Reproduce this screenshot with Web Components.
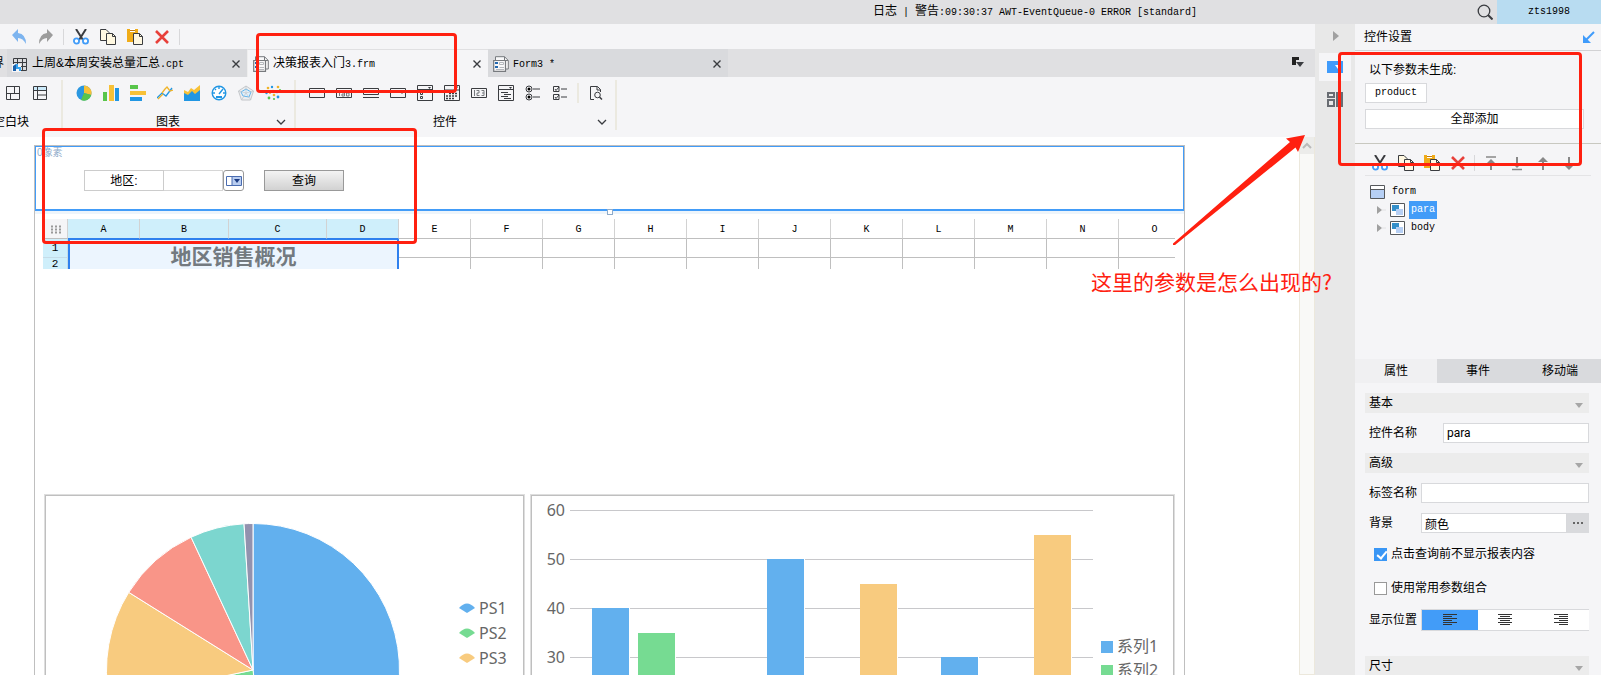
<!DOCTYPE html>
<html lang="zh-CN">
<head>
<meta charset="utf-8">
<title>Report Designer</title>
<style>
html,body{margin:0;height:100%;overflow:hidden;background:#f5f5f7}
body{font:12px/16px "Liberation Sans","Noto Sans CJK SC",sans-serif;color:#000}
</style>
</head>
<body>
<designer-app></designer-app>
<script>
const BASE = `*{box-sizing:border-box}
button,input{font:inherit;color:inherit;margin:0;border-radius:0}
button{background:none;border:0;padding:0;display:flex;align-items:center;justify-content:center}
.m{font:10px/16px "Liberation Mono",monospace}
`;
function define(name, css, html, setup) {
  const tpl = document.createElement('template');
  tpl.innerHTML = `<style>${BASE}${css}</style>${html}`;
  customElements.define(name, class extends HTMLElement {
    constructor() {
      super();
      this.attachShadow({mode: 'open'}).append(tpl.content.cloneNode(true));
    }
    connectedCallback() { if (setup) setup(this, this.shadowRoot); }
  });
}

/* icons, each drawn on a 16 x 16 grid */
const ICONS = {
  undo: '<path d="M1 6 7 0v4q8 1 8 11Q12 9 7 9v4z" fill="#7db4ef"/>',
  redo: '<path d="M15 6 9 0v4Q1 5 1 15 4 9 9 9v4z" fill="#9c9c9c"/>',
  cut: '<path d="M3 0 10 11M13 0 6 11" stroke="#3a3c40" stroke-width="2" fill="none"/><circle cx="3.500" cy="12" r="2.600" fill="#fff" stroke="#429cf8" stroke-width="1.800"/><circle cx="12.500" cy="12" r="2.600" fill="#fff" stroke="#429cf8" stroke-width="1.800"/>',
  copy: '<path d="M.5.500H6L9 3.500V11.500H.500z" fill="#fff8e1" stroke="#3a3c40"/><path d="M6.500 4.500H12.500L15.500 7.500V15.500H6.500z" fill="#fff8e1" stroke="#3a3c40"/><path d="M12.500 4.500V7.500H15.500" fill="none" stroke="#3a3c40"/>',
  paste: '<path d="M0 0H11V13H0z" fill="#f0ac18"/><path d="M3 0H8V3H3z" fill="#fff"/><path d="M3 1H8V2H3z" fill="#c27b10"/><path d="M6.500 4.500H12.500L15.500 7.500V15.500H6.500z" fill="#fff8e1" stroke="#3a3c40"/><path d="M12.500 4.500V7.500H15.500" fill="none" stroke="#3a3c40"/>',
  del: '<path d="M2 2 14 14M14 2 2 14" stroke="#e8403a" stroke-width="2.600"/>',
  close: '<path d="M4.500 4.500 11.500 11.500M11.500 4.500 4.500 11.500" stroke="#3a3c40" stroke-width="1.400"/>',
  cpt: '<path d="M1.500 2.500H14.500V14.500H1.500zM1.500 6.500H14.500M6 10.500H14.500M5.500 2.500V8M10.500 2.500V14.500" fill="none" stroke="#3a3c40"/><path d="M0 8H9V16H0z" fill="#f5f5f7"/><path d="M1 10 4 8V15H1z" fill="#1b61ac"/><path d="M4 8H6V11H9V15H7V13H4z" fill="#36a3ee"/>',
  frm: '<path d="M2.500 4V.700H11.500L15.300 4.500V13H13" fill="#f8f8f9" stroke="#777a7e"/><path d="M11.500.700V4.500H15" fill="none" stroke="#777a7e"/><path d="M.700 4.500H12.500V15.300H.700z" fill="#f8f8f9" stroke="#777a7e" stroke-width="1.200"/><path d="M2 6H5V8H2zM2 10H5V12H2z" fill="#2469b0"/><path d="M6.500 6.500H10.500V8.500H6.500zM6.500 11.500H11M3 13.500H11" stroke="#b5b8bd" fill="none"/>',
  blank1: '<path d="M1.500 1.500H14.500V14.500H1.500zM1.500 8.500H14.500M9.500 1.500V8M5.500 8.500V14.500" fill="none" stroke="#3a3c40"/>',
  blank2: '<path d="M1.500 1.500H14.500V5.500H1.500z" fill="#cbeafa"/><path d="M1.500 1.500H14.500V14.500H1.500zM1.500 5.500H14.500M5.500 1.500V14.500M5.500 10H14.500" fill="none" stroke="#3a3c40"/>',
  pie: '<circle cx="8" cy="8" r="7.500" fill="#2a97e0"/><path d="M8 8V.500A7.500 7.500 0 0 1 15.300 10z" fill="#f7c137"/><path d="M8 8 15.300 10A7.500 7.500 0 0 1 5 15z" fill="#58c54b"/>',
  bars: '<path d="M0 7H4V16H0z" fill="#58c54b"/><path d="M6 0H11V16H6z" fill="#f7c137"/><path d="M12 3H16V16H12z" fill="#2196e3"/>',
  hbars: '<path d="M0 0H8V4H0z" fill="#58c54b"/><path d="M0 6H16V10H0z" fill="#f7c137"/><path d="M0 12H12V16H0z" fill="#2196e3"/>',
  lines: '<path d="M0 13 5 8 9 11 15 3" fill="none" stroke="#2196e3" stroke-width="1.300"/><path d="M1 14 6 9M8 4 10 2 13 6 16 5M5 8 8 4" fill="none" stroke="#f0b429" stroke-width="1.300"/>',
  area: '<path d="M0 16V5L4 7 7 3 10 5 16 0V16z" fill="#f7c137"/><path d="M0 16V8L4 10 8 6 11 9 16 5V16z" fill="#2196e3"/>',
  gauge: '<circle cx="8" cy="8" r="6.800" fill="#fff" stroke="#2196e3" stroke-width="1.400"/><path d="M8 2V4M2 8H4M12 8H14M4 4 5 5M12 4 8 9" stroke="#2196e3" stroke-width="1.400"/><path d="M5 11H11V13H5z" fill="#2196e3"/>',
  radar: '<path d="M8 1 15.500 6 12.500 15H3.500L.500 6z" fill="#eceef0" stroke="#c3c6ca"/><path d="M8 4 13 7 11 12 5 11 3 7z" fill="#e2f1fc" stroke="#63b5ec"/><path d="M8 1V8L13 15M8 8 .500 6M8 8 15.500 6M8 8 3.500 15" stroke="#c3c6ca" fill="none" stroke-width=".7"/>',
  scatter: '<g fill="#f0b429"><circle cx="3" cy="3" r="1.300"/><circle cx="8" cy="6" r="1.200"/><circle cx="13" cy="2" r="1.300"/><circle cx="9" cy="10" r="1.300"/><circle cx="5" cy="8" r="1"/></g><g fill="#2196e3"><circle cx="7" cy="2" r="1.200"/><circle cx="12" cy="7" r="1.300"/><circle cx="1.500" cy="8" r="1.200"/><circle cx="13" cy="12" r="1.400"/></g><g fill="#58c54b"><circle cx="4" cy="13" r="1.400"/><circle cx="9" cy="14" r="1.100"/><circle cx="15" cy="5" r="1"/></g>',
  box: '<path d="M.500 3.500H15.500V12.500H.500z" fill="none" stroke="#3a3c40"/>',
  lab: '<path d="M.500 3.500H15.500V12.500H.500z" fill="none" stroke="#3a3c40"/><path d="M3.500 5V11M8.500 7V11H6V9H8M10.500 5V11H13V8H10.500" fill="none" stroke="#777a7e"/>',
  btn: '<path d="M.500 3.500H15.500V9.500H.500z" fill="none" stroke="#3a3c40"/><path d="M0 12.500H16" stroke="#3a3c40"/>',
  combo: '<path d="M.500 3.500H15.500V12.500H.500z" fill="none" stroke="#3a3c40"/><path d="M10 6.500H14L12 9z" fill="#3a3c40"/>',
  list: '<path d="M.500.500H15.500V15.500H.500zM.500 4.500H15.500" fill="none" stroke="#3a3c40"/><path d="M11 2H14L12.500 4z" fill="#3a3c40"/><path d="M3.500 7.500H5.500V9.500H3.500zM3.500 11.500H5.500V13.500H3.500z" fill="none" stroke="#3a3c40"/>',
  date: '<path d="M.500.500H15.500V15.500H.500zM.500 5H15.500" fill="none" stroke="#3a3c40"/><path d="M10 2H14" stroke="#3a3c40"/><path d="M5 8.500H14M2 11H14M2 13.500H11" stroke="#3a3c40" stroke-width="1.500" stroke-dasharray="2 1"/>',
  num: '<path d="M.500 3.500H15.500V12.500H.500z" fill="none" stroke="#3a3c40"/><path d="M3.500 5V11M5.500 5.500H8V8H6V10.500H8.500M10.500 5.500H13V10.500H10.500M11 8H13" fill="none" stroke="#777a7e"/>',
  tree: '<path d="M.500.500H15.500V15.500H.500zM.500 4.500H15.500" fill="none" stroke="#3a3c40"/><path d="M11 2H14L12.500 4z" fill="#3a3c40"/><path d="M3 7.500H10M6 9.500H13M3 11.500H10M6 13.500H13" stroke="#3a3c40"/>',
  radios: '<g fill="none" stroke="#3a3c40"><circle cx="4" cy="4" r="3"/><circle cx="4" cy="12" r="3"/><path d="M8 4H15M8 12H15"/></g><circle cx="4" cy="4" r="1.500"/><circle cx="4" cy="12" r="1.500"/>',
  checks: '<path d="M1.500 1.500H7V6.500H1.500zM1.500 9.500H7V14.500H1.500zM9 4H15M9 12H15" fill="none" stroke="#3a3c40"/><path d="M3 4 4 5.500 7 2M3 12 4 13.500 7 10" fill="none" stroke="#3a3c40"/>',
  preview: '<path d="M6 14.500H2.500V1.500H9.500L12.500 4.500V7" fill="none" stroke="#3a3c40"/><path d="M9 1.500V5H12.500" fill="none" stroke="#3a3c40"/><circle cx="9.500" cy="10" r="2.800" fill="none" stroke="#3a3c40"/><path d="M11.500 12 14 14.500" stroke="#3a3c40" stroke-width="1.500"/>',
  chev: '<path d="M4 6 8 10 12 6" fill="none" stroke="#3a3c40" stroke-width="1.300"/>',
  up: '<path d="M4 10 8 6 12 10" fill="none" stroke="#bababa" stroke-width="2"/>',
  find: '<circle cx="7" cy="7" r="5.800" fill="none" stroke="#3a3c40" stroke-width="1.300"/><path d="M11 11 15.500 15.500" stroke="#3a3c40" stroke-width="2"/>',
  tabsmenu: '<path d="M2 2H9V5H6V10H2z" fill="#222"/><path d="M6 7H14L10 12z" fill="#3a3c40"/>',
  right: '<path d="M6 3 12 8 6 13z" fill="#a0a0a0"/>',
  node: '<path d="M5 4 10 8 5 12z" fill="#a0a0a0"/><path d="M10 8H14" stroke="#e2e2e4"/>',
  widget: '<path d="M0 2H16V14H0z" fill="#3f9bfb"/><path d="M8 6H14L11 10z" fill="#fff"/>',
  layout: '<path d="M1 2H7V6H1zM1 9H7V15H1zM10 2H15V15H10z" fill="none" stroke="#686c72" stroke-width="2"/>',
  pop: '<path d="M13 3 4 12" stroke="#3f9bfb" stroke-width="2"/><path d="M2 6V14H10z" fill="#3f9bfb"/>',
  top: '<path d="M3 2H13" stroke="#888" stroke-width="1.500"/><path d="M8 4 13 9H3z" fill="#888"/><path d="M8 8V15" stroke="#888" stroke-width="2"/>',
  bottom: '<path d="M3 14.500H13" stroke="#888" stroke-width="1.500"/><path d="M8 13 13 8H3z" fill="#888"/><path d="M8 2V9" stroke="#888" stroke-width="2"/>',
  ups: '<path d="M8 2 13 7H3z" fill="#888"/><path d="M8 5V15" stroke="#888" stroke-width="2"/>',
  downs: '<path d="M8 15 13 10H3z" fill="#888"/><path d="M8 2V12" stroke="#888" stroke-width="2"/>',
  form: '<path d="M.500 1.500H14.500V14.500H.500z" fill="#fff" stroke="#55585c"/><path d="M1 6H14V14H1z" fill="#b6cff4"/><path d="M1 5.500H14" stroke="#55585c"/>',
  pane: '<path d="M.500 1.500H14.500V14.500H.500z" fill="#fff" stroke="#55585c"/><path d="M2 3H9V9H2z" fill="#348fca"/><path d="M6 7H13V13H6z" fill="#b6cff4"/>',
  drop: '<path d="M4 6H12L8 11z" fill="#a6a6a6"/>',
  al: '<path d="M1 2.500H15M1 4.500H10M1 6.500H15M1 8.500H10M1 10.500H15M1 12.500H10" stroke="#333"/>',
  ac: '<path d="M1 2.500H15M3 4.500H13M1 6.500H15M3 8.500H13M1 10.500H15M3 12.500H13" stroke="#333"/>',
  ar: '<path d="M1 2.500H15M6 4.500H15M1 6.500H15M6 8.500H15M1 10.500H15M6 12.500H15" stroke="#333"/>',
  dots: '<path d="M3 8H5M7 8H9M11 8H13" stroke="#666" stroke-width="2"/>',
  dropbox: '<path d="M.500 3.500H15.500V12.500H.500z" fill="#fff" stroke="#4a6cb0"/><path d="M6 4H15V12H6z" fill="#b9cdf0"/><path d="M6 3V13" stroke="#4a6cb0"/><path d="M8 6H14L11 10z" fill="#1c3c84"/>'
};
define('ui-icon', ':host{display:block;flex:none;width:16px;height:16px}svg{display:block;width:100%;height:100%}',
  '<svg viewBox="0 0 16 16" aria-hidden="true"></svg>',
  (el, r) => r.querySelector('svg').innerHTML = ICONS[el.getAttribute('name')] || '');

const tool = (n, label) => `<button aria-label="${label}"><ui-icon name="${n}"></ui-icon></button>`;

define('status-bar', `:host{display:flex;height:24px;background:#e0e0e2;align-items:center}
.log{margin-left:auto;margin-right:280px;white-space:pre}
.user{width:104px;height:24px;margin-left:4px;background:#b8dcf1}`,
`<span class="log">日志<span class="m"> | </span>警告<span class="m">:09:30:37 AWT-EventQueue-0 ERROR [standard]</span></span>
${tool('find','搜索')}<button class="user m">zts1998</button>`);

define('quick-toolbar', `:host{display:flex;height:25px;background:#f5f5f7;align-items:center;padding-left:11px;gap:11px}
i{width:1px;height:16px;background:#d8d8da;margin:0 -2px}`,
`${tool('undo','撤销')}${tool('redo','重做')}<i></i>${tool('cut','剪切')}${tool('copy','复制')}${tool('paste','粘贴')}${tool('del','删除')}<i></i>`);

define('doc-tab', `:host{display:flex;flex:none;width:240px;height:28px;align-items:center;padding:0 3px 0 5px;gap:4px;background:#d9dadd;border-top:1px solid #d9dadd}
:host([active]){background:#f5f5f7;border-top-color:#e0e0e2}
button{margin-left:auto}span{white-space:nowrap}`,
`<ui-icon></ui-icon><span><slot></slot></span>${tool('close','关闭')}`,
(el, r) => { const i = r.querySelector('ui-icon'); i.setAttribute('name', el.getAttribute('icon')); i.connectedCallback(); });

define('tab-strip', `:host{display:flex;height:28px;background:#e0e0e2;align-items:center}
.prev{width:7px;height:28px;overflow:hidden;display:flex;align-items:center;justify-content:flex-end;padding-right:3px}
doc-tab:first-of-type{width:241px;border-right:1px solid #eee}
.menu{margin-left:auto;margin-right:9px}`,
`<span class="prev">界</span><doc-tab icon="cpt">上周&amp;本周安装总量汇总<span class="m">.cpt</span></doc-tab>
<doc-tab icon="frm" active>决策报表入门<span class="m">3.frm</span></doc-tab>
<doc-tab icon="frm"><span class="m">Form3 *</span></doc-tab>
<button class="menu" aria-label="标签列表"><ui-icon name="tabsmenu"></ui-icon></button>`);

define('ribbon-group', `:host{display:flex;flex:none;flex-direction:column;height:50px;border-right:2px solid #ebe9e0}
.icons{display:flex;height:26px;align-items:center;gap:11px;padding-left:var(--inset)}
.cap{display:flex;height:24px;align-items:center;padding:8px 5px 0 0}
.cap span{flex:1;text-align:center;white-space:nowrap}
:host([plain]) button{visibility:hidden}
:host([plain]) .cap{margin-left:-18px}`,
`<div class="icons"><slot></slot></div><div class="cap"><span></span><button aria-label="更多"><ui-icon name="chev"></ui-icon></button></div>`,
(el, r) => r.querySelector('span').textContent = el.getAttribute('label'));

define('tool-ribbon', `:host{display:flex;height:60px;background:#f5f5f7;padding-top:3px}
.a{width:63px;--inset:5px}.b{width:233px;--inset:13px}.c{width:321px;--inset:13px}
i{width:2px;height:20px;background:#ebe9e0;margin:0 -2px}`,
`<ribbon-group class="a" label="空白块" plain>${tool('blank1','空白块')}${tool('blank2','页签块')}</ribbon-group>
<ribbon-group class="b" label="图表">${['pie','bars','hbars','lines','area','gauge','radar','scatter'].map((n,i)=>tool(n,'图表'+(i+1))).join('')}</ribbon-group>
<ribbon-group class="c" label="控件">${['box','lab','btn','combo','list','date','num','tree','radios','checks'].map((n,i)=>tool(n,'控件'+(i+1))).join('')}<i></i>${tool('preview','预览')}</ribbon-group>`);

define('para-form', `:host{display:block;position:relative;height:65px;border:1px solid #429cf8;border-bottom-width:2px}
small{font-size:10px;line-height:12px;color:#8fabca;display:block;height:12px;padding-left:1px}
form{display:flex;margin:11px 0 0 48px}
label{width:80px;height:21px;border:1px solid #ccc;display:flex;align-items:center;justify-content:center}
input{width:59px;height:21px;border:1px solid #d6d6d6;border-left:0;background:#fff}
.d{width:21px;height:21px;border:1px solid #999;border-radius:3px}
.q{width:80px;height:21px;margin-left:20px;border:1px solid #999;background:linear-gradient(#f3f3f3,#d2d2d2)}
.h{position:absolute;top:62px;left:571px;width:6px;height:6px;border:1px solid #8fabca;background:#fff}`,
`<small>0像素</small><form><label for="area">地区:</label><input id="area"><button type="button" class="d" aria-label="展开"><ui-icon name="dropbox"></ui-icon></button><button type="button" class="q">查询</button></form><i class="h"></i>`);

const rest = 'EFGHIJKLMNO'.split('');
define('report-grid', `:host{display:block;height:50px;overflow:hidden;margin:5px 9px 0 8px}
table{border-collapse:separate;border-spacing:0;table-layout:fixed;width:1148px}
th,td{padding:0;text-align:center;font-weight:400;border-right:1px solid #bfbfbf;border-bottom:1px solid #bfbfbf;height:19px;line-height:16px}
thead th{height:20px;padding-top:2px;font:10px/16px "Liberation Mono",monospace;border-right-color:#d2d2d2}
th.s{background:#cfeffb}thead th.s{border-bottom-color:#2f80ee}
th.k{background:#f5f5f7}tbody th{background:#cfeffb;border-color:#c4dce8;font:11px/11px "Liberation Mono",monospace}
tr.r2 th,tr.r2 td{height:13px}
td.t{background:#ecf5fe;border:2px solid #2f80ee;border-top-width:1px;border-bottom:0;padding-bottom:2px;color:#737a80;font:700 21px/24px "Noto Sans CJK SC",sans-serif}
svg{display:block;margin:auto}`,
`<table><colgroup><col style="width:25px"><col style="width:72px"><col style="width:89px"><col style="width:98px"><col style="width:72px">${rest.map(()=>'<col style="width:72px">').join('')}</colgroup>
<thead><tr><th class="k"><svg width="11" height="9"><path d="M1 1.500H11M1 4.500H11M1 7.500H11" stroke="#999" stroke-width="2" stroke-dasharray="2 2"/></svg></th>${['A','B','C','D'].map(c=>`<th class="s">${c}</th>`).join('')}${rest.map(c=>`<th>${c}</th>`).join('')}</tr></thead>
<tbody><tr><th>1</th><td class="t" colspan="4" rowspan="2">地区销售概况</td>${rest.map(()=>'<td></td>').join('')}</tr><tr class="r2"><th>2</th>${rest.map(()=>'<td></td>').join('')}</tr></tbody></table>`);

const CARD = `:host{display:block;height:380px;border:1px solid #dedede;overflow:hidden;min-width:0}
div{height:100%;border:1px solid #bfbfbf;overflow:hidden}svg{display:block}text{font:16px "Noto Sans","Noto Sans CJK SC",sans-serif;fill:#666}`;
const wedge = (a, b, c) => {
  const p = t => `${(207 + 146.5 * Math.sin(t * Math.PI / 180)).toFixed(2)} ${(174 - 146.5 * Math.cos(t * Math.PI / 180)).toFixed(2)}`;
  return `<path d="M207 174L${p(a)}A146.5 146.5 0 ${b - a > 180 ? 1 : 0} 1 ${p(b)}z" fill="${c}" stroke="#fff" stroke-width="1"/>`;
};
define('pie-card', CARD, `<div><svg width="478" height="376">
${wedge(0,173,'#62b0ee')}${wedge(173,258,'#76db92')}${wedge(258,302,'#f8cb7f')}${wedge(302,335,'#f99588')}${wedge(335,356.5,'#7cd6cf')}${wedge(356.5,360,'#9292ae')}
${[['PS1','#62b0ee',112],['PS2','#76db92',137],['PS3','#f8cb7f',162]].map(([t,c,y])=>`<path d="M413 ${y}Q421 ${y-9} 429 ${y}L421 ${y+5}z" fill="${c}"/><text x="433" y="${y+6}">${t}</text>`).join('')}
</svg></div>`);
define('bar-card', CARD, `<div><svg width="640" height="376">
${[60,50,40,30].map((n,i)=>`<text x="33" y="${20+49*i}" text-anchor="end">${n}</text><path d="M38 ${14.5+49*i}H561" stroke="#c8c8cb"/>`).join('')}
${[[60,112,'#62b0ee'],[106,137,'#76db92'],[235,63,'#62b0ee'],[328,88,'#f8cb7f'],[409,161,'#62b0ee'],[502,39,'#f8cb7f']].map(([x,y,c])=>`<rect x="${x}" y="${y}" width="37" height="300" fill="${c}"/><rect x="${x+37}" y="${y}" width="1" height="300" fill="#fff"/>`).join('')}
<rect x="569" y="145" width="12" height="12" fill="#62b0ee"/><text x="585" y="156">系列1</text>
<rect x="569" y="169" width="12" height="12" fill="#76db92"/><text x="585" y="180">系列2</text>
</svg></div>`);

define('design-canvas', `:host{display:flex;flex:1;min-height:0;background:#fff;overflow:hidden;padding-left:34px}
.page{flex:1;min-width:0;margin:8px 114px 0 0;border:1px solid #bfbfbf;border-bottom:0}
.strip{height:3px;background:#eef5fb}
.cards{display:grid;grid-template-columns:481fr 645fr;gap:5px;margin:225px 9px 0 9px}
.bar{width:16px;border:1px solid #ece8dc;border-top:0;background:#f9f9f7}
.bar button{width:14px;height:17px;background:#ececea}`,
`<div class="page"><para-form></para-form><div class="strip"></div><report-grid></report-grid><div class="cards"><pie-card></pie-card><bar-card></bar-card></div></div>
<div class="bar"><button aria-label="向上滚动"><ui-icon name="up"></ui-icon></button></div>`);

define('dock-rail', `:host{display:flex;flex-direction:column;width:40px;background:#e8e8e8;align-items:center}
button{width:32px;height:28px}.p{height:24px;margin-bottom:5px}.on{background:#f5f5f7;margin-bottom:4px}`,
`<button class="p" aria-label="收起"><ui-icon name="right"></ui-icon></button><button class="on" aria-label="控件设置"><ui-icon name="widget"></ui-icon></button><button aria-label="控件库"><ui-icon name="layout"></ui-icon></button>`);

define('section-head', `:host{display:block;height:20px;background:#ececec}
button{width:100%;height:20px;justify-content:space-between;padding:0 2px 0 4px}ui-icon{margin-top:4px}`,
`<button><slot></slot><ui-icon name="drop"></ui-icon></button>`);

define('property-panel', `:host{display:flex;flex-direction:column;width:246px;background:#f5f5f7;overflow:hidden}
:host>*,h2,.miss,.tools,.tree,.tabs,section-head,.row,.chk{flex:none}
h2{margin:0;font:inherit;height:27px;border-bottom:1px solid #d2d2d4;display:flex;align-items:center;justify-content:space-between;padding:0 4px 0 9px}
.miss{height:93px;padding:11px 17px 0 10px;border-bottom:1px solid #c8c8c0}
.miss p{margin:0 0 5px 4px}
.miss button{background:#fff;border:1px solid #d8d9dc;height:20px}
.miss .one{width:62px;margin-bottom:6px}.miss .all{width:100%}
.tools{display:flex;height:32px;margin:0 10px;padding:7px 0 0 7px;align-items:center;gap:10px;border-bottom:1px solid #e4e4e6}
.tools i{width:1px;height:16px;background:#d8d8da;margin:0 -2px}
ul{list-style:none;margin:0;padding:0}.tree{height:183px;padding:7px 0 0 15px}
li span{display:flex;align-items:center;height:18px;gap:4px}li li span{gap:2px;padding-left:2px}
li b{font:400 10px/18px "Liberation Mono",monospace;padding:0 2px}
li li b{margin-left:1px}li b.on{background:#429cf8;color:#fff}
.tabs{display:grid;grid-template-columns:1fr 1fr 1fr;height:24px;background:#d9dadd;margin-bottom:10px}
.tabs .on{background:#f0f0f2}
section-head{margin:0 12px 0 10px}
.row{display:flex;align-items:center;height:20px;margin:10px 12px 10px 14px}.row+.row{margin-top:0}
.row>label,.row>.l{width:52px}.row.w>label{width:74px}
.row input{flex:1;min-width:0;height:20px;border:1px solid #d8d9dc;background:#fff;padding:0 3px;outline:0}
.row button.more{width:22px;height:20px;background:#d9dadd}
.chk{display:flex;align-items:center;height:16px;margin:3px 0 0 19px;gap:4px}
.chk+.chk{margin-top:18px}
.chk input{appearance:none;width:13px;height:13px;border:1px solid #999;background:#fff;position:relative}
.chk input:checked{background:#3996f5;border-color:#3996f5}
.chk input:checked::before{content:"";position:absolute;left:4px;top:0;width:4px;height:8px;border:solid #fff;border-width:0 2px 2px 0;transform:rotate(40deg)}
.row.seg{height:22px;margin-top:13px;margin-bottom:25px}
.g{flex:1;display:grid;grid-template-columns:1fr 1fr 1fr;height:22px;border:1px solid #d8d9dc;border-right:0;background:#fff}
.g .on{background:#429cf8}
.row.w input{font:12px "Roboto",sans-serif}`,
`<h2>控件设置<ui-icon name="pop"></ui-icon></h2>
<div class="miss"><p>以下参数未生成:</p><button class="one m">product</button><button class="all">全部添加</button></div>
<div class="tools">${tool('cut','剪切')}${tool('copy','复制')}${tool('paste','粘贴')}${tool('del','删除')}<i></i>${tool('top','置顶')}${tool('bottom','置底')}${tool('ups','上移')}${tool('downs','下移')}</div>
<ul class="tree"><li><span><ui-icon name="form"></ui-icon><b>form</b></span><ul>
<li><span><ui-icon name="node"></ui-icon><ui-icon name="pane"></ui-icon><b class="on">para</b></span></li>
<li><span><ui-icon name="node"></ui-icon><ui-icon name="pane"></ui-icon><b>body</b></span></li></ul></li></ul>
<div class="tabs"><button class="on">属性</button><button>事件</button><button>移动端</button></div>
<section-head>基本</section-head>
<div class="row w"><label for="n">控件名称</label><input id="n" value="para"></div>
<section-head>高级</section-head>
<div class="row"><label for="t">标签名称</label><input id="t"></div>
<div class="row"><label for="bg">背景</label><input id="bg" value="颜色"><button class="more" aria-label="选择"><ui-icon name="dots"></ui-icon></button></div>
<div class="chk"><input type="checkbox" id="c1" checked><label for="c1">点击查询前不显示报表内容</label></div>
<div class="chk"><input type="checkbox" id="c2"><label for="c2">使用常用参数组合</label></div>
<div class="row seg"><span class="l">显示位置</span><div class="g"><button class="on" aria-label="左"><ui-icon name="al"></ui-icon></button><button aria-label="中"><ui-icon name="ac"></ui-icon></button><button aria-label="右"><ui-icon name="ar"></ui-icon></button></div></div>
<section-head>尺寸</section-head>`);

/* red review marks lying over the workspace */
define('review-marks', `:host{position:absolute;inset:0;pointer-events:none;overflow:hidden}
i{position:absolute;border:3px solid #ff2010;border-radius:4px}
.a{left:256px;top:33px;width:201px;height:60px}.b{left:42px;top:128px;width:375px;height:116px}.c{right:19px;top:52px;width:244px;height:114px}
svg{position:absolute;right:295px;top:134px}
p{position:absolute;right:269px;top:267px;margin:0;white-space:nowrap;color:#ff2010;font:400 21px/28px "Noto Sans CJK SC",sans-serif}`,
`<i class="a"></i><i class="b"></i><i class="c"></i>
<svg width="134" height="113"><path d="M1 111 1 109.500 118 8 114 4.500 133 1 126 18 123.500 13.500 3 111z" fill="#ff2010"/></svg><p>这里的参数是怎么出现的?</p>`);

define('designer-app', `:host{display:flex;flex-direction:column;height:100vh;position:relative;overflow:hidden}
main{flex:1;display:flex;min-height:0}.work{flex:1;min-width:0;display:flex;flex-direction:column}`,
`<status-bar></status-bar><main><div class="work"><quick-toolbar></quick-toolbar><tab-strip></tab-strip><tool-ribbon></tool-ribbon><design-canvas></design-canvas></div><dock-rail></dock-rail><property-panel></property-panel></main><review-marks></review-marks>`);
</script>
</body>
</html>
